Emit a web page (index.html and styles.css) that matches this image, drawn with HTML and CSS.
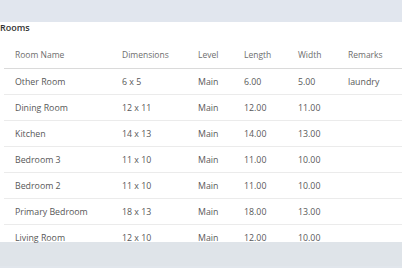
FILE: index.html
```html
<!DOCTYPE html>
<html lang="en">
<head>
<meta charset="utf-8">
<title>Rooms</title>
<link rel="stylesheet" href="styles.css">
</head>
<body>
<div class="band band-top"></div>
<section class="panel">
  <h2 class="title">Rooms</h2>
  <div class="table-wrap">
    <table class="rooms">
      <colgroup>
        <col class="c1"><col class="c2"><col class="c3"><col class="c4"><col class="c5"><col class="c6">
      </colgroup>
      <thead>
        <tr><th>Room Name</th><th>Dimensions</th><th>Level</th><th>Length</th><th>Width</th><th>Remarks</th></tr>
      </thead>
      <tbody>
        <tr><td>Other Room</td><td>6 x 5</td><td>Main</td><td>6.00</td><td>5.00</td><td>laundry</td></tr>
        <tr><td>Dining Room</td><td>12 x 11</td><td>Main</td><td>12.00</td><td>11.00</td><td></td></tr>
        <tr><td>Kitchen</td><td>14 x 13</td><td>Main</td><td>14.00</td><td>13.00</td><td></td></tr>
        <tr><td>Bedroom 3</td><td>11 x 10</td><td>Main</td><td>11.00</td><td>10.00</td><td></td></tr>
        <tr><td>Bedroom 2</td><td>11 x 10</td><td>Main</td><td>11.00</td><td>10.00</td><td></td></tr>
        <tr><td>Primary Bedroom</td><td>18 x 13</td><td>Main</td><td>18.00</td><td>13.00</td><td></td></tr>
        <tr><td>Living Room</td><td>12 x 10</td><td>Main</td><td>12.00</td><td>10.00</td><td></td></tr>
      </tbody>
    </table>
  </div>
</section>
<div class="band band-bottom"></div>
</body>
</html>
```
FILE: styles.css
```css
html, body {
  margin: 0;
  padding: 0;
}
body {
  width: 402px;
  height: 268px;
  overflow: hidden;
  background: #e1e6ec;
  font-family: "Open Sans", "Liberation Sans", sans-serif;
  font-size: 8.8px;
}
.band {
  height: 24px;
}
.band-top {
  background: #e1e6ee;
}
.band-bottom {
  background: #dfe4e9;
}
.panel {
  height: 220px;
  background: #fff;
}
.title {
  margin: -2px 0 0 0;
  padding: 0;
  font-size: 9px;
  line-height: 12px;
  font-weight: 600;
  color: #333;
}
.table-wrap {
  margin-top: 8px;
  height: 202px;
  overflow: hidden;
}
.rooms {
  margin-left: 4px;
  width: 398px;
  border-collapse: collapse;
  table-layout: fixed;
}
.c1 { width: 107px; }
.c2 { width: 76px; }
.c3 { width: 46px; }
.c4 { width: 54px; }
.c5 { width: 50px; }
.c6 { width: auto; }
.rooms th,
.rooms td {
  padding: 0 0 0 11px;
  text-align: left;
  white-space: nowrap;
  line-height: 12px;
  vertical-align: middle;
}
.rooms th {
  height: 26px;
  font-size: 8.5px;
  font-weight: 400;
  color: #6e6e6e;
  border-bottom: 1px solid #dadada;
}
.rooms td {
  height: 25px;
  color: #585858;
  border-bottom: 1px solid #ebebeb;
}
```
